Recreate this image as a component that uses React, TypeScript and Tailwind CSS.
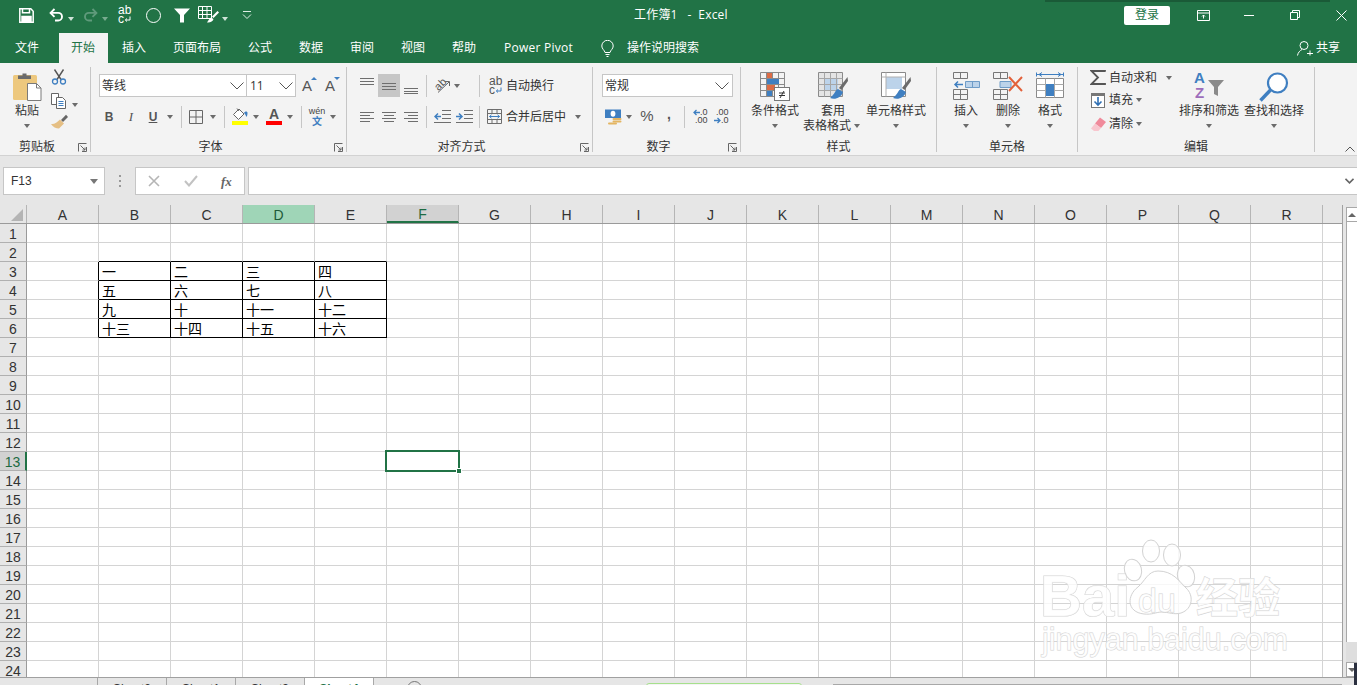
import React from 'react';

const COLS = ['A', 'B', 'C', 'D', 'E', 'F', 'G', 'H', 'I', 'J', 'K', 'L', 'M', 'N', 'O', 'P', 'Q', 'R'];
const ROWS = Array.from({ length: 24 }, (_, i) => i + 1);

const TABLE: Record<number, string[]> = {
  3: ['一', '二', '三', '四'],
  4: ['五', '六', '七', '八'],
  5: ['九', '十', '十一', '十二'],
  6: ['十三', '十四', '十五', '十六'],
};

function Caret({ light }: { light?: boolean }) {
  return (
    <span
      className={`inline-block w-0 h-0 border-x-[3.5px] border-x-transparent border-t-[4px] ${
        light ? 'border-t-[#cfe3d8]' : 'border-t-[#6b6b6b]'
      }`}
    />
  );
}

function Slot({ className, children }: { className: string; children?: React.ReactNode }) {
  return <div className={`flex items-center justify-center h-[23px] shrink-0 ${className}`}>{children}</div>;
}

function Sep({ className = '' }: { className?: string }) {
  return (
    <div className={`flex justify-center w-[8px] shrink-0 ${className}`}>
      <div className="w-px h-[22px] bg-[#c6c6c6]" />
    </div>
  );
}

function Chevron({ className = '' }: { className?: string }) {
  return (
    <svg width="14" height="8" viewBox="0 0 14 8" fill="none" stroke="#555" className={className}>
      <path d="M0.5 0.5 7 7 13.5 0.5" />
    </svg>
  );
}

function Launcher() {
  return (
    <svg width="9" height="9" viewBox="0 0 9 9" fill="none" stroke="#666" className="absolute right-[3px] bottom-0">
      <path d="M0.5 8.5v-8h8M8.5 4v4.5H4M2.5 2.5 7 7M7 4.5V7H4.5" />
    </svg>
  );
}

function Group({
  className,
  label,
  launcher,
  children,
}: {
  className: string;
  label: string;
  launcher?: boolean;
  children: React.ReactNode;
}) {
  return (
    <div className={`relative my-[4px] h-[85px] border-r border-[#c6c6c6] shrink-0 ${className}`}>
      <div className="h-[68px]">{children}</div>
      <div className={`pt-[5px] text-center text-[12px] leading-[14px] text-[#333] ${launcher ? 'pr-[16px]' : ''}`}>
        {label}
      </div>
      {launcher && <Launcher />}
    </div>
  );
}

function BigButton({
  className,
  icon,
  label,
  second,
  noCaret,
}: {
  className: string;
  icon: React.ReactNode;
  label: string;
  second?: string;
  noCaret?: boolean;
}) {
  return (
    <div className={`flex flex-col items-center pt-[5px] text-[12px] leading-[15px] text-[#333] shrink-0 ${className}`}>
      <div className="flex items-start justify-center h-[31px]">{icon}</div>
      <div className="whitespace-nowrap">{label}</div>
      {second ? (
        <div className="flex items-center gap-[3px] whitespace-nowrap pr-[3px]">
          {second}
          <Caret />
        </div>
      ) : (
        !noCaret && (
          <div className="flex items-center h-[15px]">
            <Caret />
          </div>
        )
      )}
    </div>
  );
}

/* ---------- title bar icons ---------- */

function SaveIcon() {
  return (
    <svg width="15" height="15" viewBox="0 0 15 15" fill="none" stroke="#fff" strokeWidth="1.5">
      <path d="M.8.8h11l2.4 2.4v11H.8z" />
      <path d="M3.5 1v3.8h7V1" />
      <path d="M3 14V8.5h9V14" fill="#fff" />
    </svg>
  );
}

function UndoIcon({ color, flip }: { color: string; flip?: boolean }) {
  return (
    <svg width="15" height="14" viewBox="0 0 15 14" fill="none" stroke={color} strokeWidth="1.9" className={flip ? '-scale-x-100' : ''}>
      <path d="M5.5 1 1.6 4.9l3.9 3.9" />
      <path d="M2 4.9h7.2a3.8 3.8 0 0 1 0 7.6H6" />
    </svg>
  );
}

function WrapIcon({ dark }: { dark?: boolean }) {
  return (
    <div className={`flex flex-col font-['Liberation_Sans',sans-serif] text-[12px] w-[13px] ${dark ? 'text-[#555]' : 'text-white'}`}>
      <span className="block h-[9px] leading-[9px]">ab</span>
      <span className="flex items-center h-[9px] leading-[9px]">
        c
        <svg width="7" height="7" viewBox="0 0 7 7" fill="none" stroke={dark ? '#3f7fc1' : '#fff'} strokeWidth="1">
          <path d="M6 0.5V4H1.5M3 2.5 1.3 4 3 5.5" />
        </svg>
      </span>
    </div>
  );
}

function FunnelIcon() {
  return (
    <svg width="16" height="15" viewBox="0 0 16 15" fill="#fff">
      <path d="M0 .5h16l-6 6.5v7.5H6V7z" />
    </svg>
  );
}

function TableBrushIcon() {
  return (
    <svg width="21" height="18" viewBox="0 0 21 18" fill="none" stroke="#fff">
      <path d="M.5.5h13v12H.5zM.5 4.5h13M.5 8.5h13M4.5.5v12M9 .5v12" />
      <path d="M19.5 5 14 10.5l1.5 1.5L21 6.5z" fill="#fff" stroke="none" />
      <path d="M13 11.5c-2 1-2.5 3-4 5 3 .5 6-1 6.5-3.5z" fill="#fff" stroke="none" />
    </svg>
  );
}

/* ---------- clipboard ---------- */

function PasteIcon() {
  return (
    <svg width="30" height="29" viewBox="0 0 30 29" className="ml-[2px]">
      <rect x="0" y="3" width="24" height="25" rx="1.5" fill="#edc87e" />
      <path d="M5 7V3.5h4.5V1.5h4V3.5H18V7z" fill="#6b6b6b" />
      <path d="M14.5 11.5h9l4.5 4.5v12.5h-13.5z" fill="#fff" stroke="#7a7a7a" />
      <path d="M23.5 11.5V16H28" fill="none" stroke="#7a7a7a" />
    </svg>
  );
}

function ScissorsIcon() {
  return (
    <svg width="16" height="16" viewBox="0 0 16 16" fill="none">
      <path d="M3.5 0.5 10 10.5M12.5 0.5 6 10.5" stroke="#555" strokeWidth="1.4" />
      <circle cx="4" cy="12.5" r="2.5" stroke="#3f7fc1" strokeWidth="1.3" />
      <circle cx="12" cy="12.5" r="2.5" stroke="#3f7fc1" strokeWidth="1.3" />
    </svg>
  );
}

function CopyIcon() {
  return (
    <svg width="16" height="16" viewBox="0 0 16 16" fill="none" stroke="#666">
      <path d="M.5.5h7v11h-7z" fill="#fff" />
      <path d="M5.5 4.5h6l3 3v8h-9z" fill="#fff" />
      <path d="M7.5 8.5h5M7.5 10.5h5M7.5 12.5h5" stroke="#3f7fc1" />
    </svg>
  );
}

function BrushIcon() {
  return (
    <svg width="17" height="15" viewBox="0 0 17 15">
      <path d="M10 6 15 .8 17 3l-5 5z" fill="#666" />
      <path d="M9 5.5 13 9.5 8 14.5c-3 0-6-1.5-8-4.5 3.5.5 6-1.5 9-4.5z" fill="#e5bf84" />
    </svg>
  );
}

/* ---------- font ---------- */

function SizeA({ up }: { up?: boolean }) {
  return (
    <div className="relative w-[15px] h-[20px] text-[#555]">
      <span className="absolute left-0 top-[1px] font-['Liberation_Sans',sans-serif] text-[15px] leading-[18px]">A</span>
      <span
        className={`absolute right-0 top-[1px] w-0 h-0 border-x-[3px] border-x-transparent ${
          up ? 'border-b-[3px] border-b-[#3f7fc1]' : 'border-t-[3px] border-t-[#3f7fc1]'
        }`}
      />
    </div>
  );
}

function BorderIcon() {
  return (
    <svg width="14" height="14" viewBox="0 0 14 14" fill="none" stroke="#666">
      <path d="M.5.5h13v13H.5zM7 .5v13M.5 7h13" />
    </svg>
  );
}

function FillIcon() {
  return (
    <div className="flex flex-col items-center">
      <svg width="16" height="13" viewBox="0 0 16 13" fill="none">
        <path d="M7 1 1.5 6.5l5 5 5.5-5.5z" fill="#fff" stroke="#666" />
        <path d="M5 .5 7 3" stroke="#666" />
        <path d="M12 5c1-2 3.5-2 3.5 0 0 2-.5 3-1 4-.5-1.5-1.5-3-2.5-4z" fill="#3f7fc1" />
      </svg>
      <div className="w-[16px] h-[4px] bg-[#ffff00]" />
    </div>
  );
}

function FontColorIcon() {
  return (
    <div className="flex flex-col items-center">
      <span className="font-['Liberation_Sans',sans-serif] font-bold text-[14px] leading-[13px] text-[#555]">A</span>
      <div className="w-[16px] h-[4px] bg-[#ff0000]" />
    </div>
  );
}

function WenIcon() {
  return (
    <div className="flex flex-col items-center">
      <span className="font-['Liberation_Sans',sans-serif] text-[9px] leading-[9px] text-[#444]">wén</span>
      <span className="text-[10px] leading-[11px] font-bold text-[#3f7fc1]">文</span>
    </div>
  );
}

/* ---------- alignment ---------- */

function Lines({ rows }: { rows: [number, number, number][] }) {
  return (
    <svg width="16" height="16" viewBox="0 0 16 16" stroke="#6e6e6e" fill="none">
      {rows.map(([x1, x2, y]) => (
        <path key={`${x1}-${y}`} d={`M${x1} ${y}.5H${x2}`} />
      ))}
    </svg>
  );
}

function OrientIcon() {
  return (
    <div className="relative w-[17px] h-[17px]">
      <span className="absolute left-[0px] top-[1px] -rotate-45 font-['Liberation_Sans',sans-serif] text-[11px] leading-[12px] text-[#555]">
        ab
      </span>
      <svg width="17" height="17" viewBox="0 0 17 17" fill="none" stroke="#666" className="absolute inset-0">
        <path d="M4 15.5 15 5M11 4.5h4.5V9" />
      </svg>
    </div>
  );
}

function IndentIcon({ right }: { right?: boolean }) {
  return (
    <svg width="17" height="15" viewBox="0 0 17 15" fill="none">
      {right ? (
        <>
          <path d="M8 1.5h9M8 5.5h9M8 9.5h9M0 13.5h17" stroke="#6e6e6e" />
          <path d="M0 7.5h5M3 4.5l3 3-3 3" stroke="#3f7fc1" strokeWidth="1.5" />
        </>
      ) : (
        <>
          <path d="M8 1.5h9M8 5.5h9M8 9.5h9M0 13.5h17" stroke="#6e6e6e" />
          <path d="M7 7.5H2M4 4.5l-3 3 3 3" stroke="#3f7fc1" strokeWidth="1.5" />
        </>
      )}
    </svg>
  );
}

function MergeIcon() {
  return (
    <svg width="15" height="15" viewBox="0 0 15 15" fill="none">
      <path d="M.5.5h14v14H.5zM.5 4.5h14M.5 10.5h14M5 .5v4M10 .5v4M5 10.5v4M10 10.5v4" stroke="#6e6e6e" />
      <path d="M2.5 7.5h10M4.5 5.8l-2 1.7 2 1.7M10.5 5.8l2 1.7-2 1.7" stroke="#3f7fc1" />
    </svg>
  );
}

/* ---------- number ---------- */

function CurrencyIcon() {
  return (
    <svg width="17" height="16" viewBox="0 0 17 16" fill="none">
      <rect x="0" y="0.5" width="16" height="8.5" fill="#3f7fc1" />
      <ellipse cx="8" cy="4.7" rx="2.4" ry="3" fill="#fff" />
      <rect x="7.5" y="9" width="9" height="2" rx="1" fill="#e4b562" />
      <rect x="7.5" y="11.5" width="9" height="2" rx="1" fill="#e4b562" />
      <rect x="3" y="13.5" width="9" height="2" rx="1" fill="#e4b562" />
    </svg>
  );
}

function DecimalIcon({ inc }: { inc?: boolean }) {
  return (
    <div className="relative w-[15px] h-[15px] font-['Liberation_Sans',sans-serif] text-[9px] leading-[7px] text-[#444] text-right">
      <div>{inc ? '.0' : '.00'}</div>
      <div className="mt-[1px]">{inc ? '.00' : '.0'}</div>
      <svg width="7" height="7" viewBox="0 0 7 7" fill="none" stroke="#3f7fc1" strokeWidth="1.3" className={`absolute left-0 ${inc ? 'top-0' : 'top-[8px]'}`}>
        {inc ? <path d="M7 3.5H1M3.5 1 1 3.5 3.5 6" /> : <path d="M0 3.5h6M3.5 1 6 3.5 3.5 6" />}
      </svg>
    </div>
  );
}

/* ---------- styles ---------- */

function CondFormatIcon() {
  return (
    <svg width="30" height="29" viewBox="0 0 30 29" fill="none">
      <path d="M.5.5h24v24H.5zM.5 6.5h24M.5 12.5h24M.5 18.5h24M6.5.5v24M12.5.5v24M18.5.5v24" stroke="#8a8a8a" />
      <rect x="7" y="1" width="5" height="5" fill="#dc6c46" />
      <rect x="7" y="7" width="12" height="5" fill="#3f7fc1" />
      <rect x="7" y="13" width="8" height="5" fill="#dc6c46" />
      <rect x="7" y="19" width="5" height="5" fill="#3f7fc1" />
      <rect x="14.5" y="15.5" width="15" height="13" fill="#fff" stroke="#777" />
      <path d="M19 21h6M19 23.5h6M24 19l-4 7" stroke="#333" />
    </svg>
  );
}

function TableStyleIcon() {
  return (
    <svg width="30" height="29" viewBox="0 0 30 29" fill="none">
      <path d="M.5.5h24v24H.5z" fill="#e4e4e4" stroke="#8a8a8a" />
      <rect x="6" y="6" width="14" height="13" fill="#bcd3ea" />
      <path d="M.5 6.5h24M.5 12.5h24M.5 18.5h24M6.5.5v24M12.5.5v24M18.5.5v24" stroke="#a6a6a6" />
      <path d="M29.5 5 21 16l2.5 2 6.5-9z" fill="#6b6b6b" />
      <path d="M20 17c-3 1-3 5-8 9 5 2 11 0 13-6z" fill="#3f7fc1" />
    </svg>
  );
}

function CellStyleIcon() {
  return (
    <svg width="30" height="29" viewBox="0 0 30 29" fill="none">
      <path d="M.5.5h24v24H.5z" fill="#fff" stroke="#8a8a8a" />
      <rect x="5" y="5" width="16" height="12" fill="#bcd3ea" />
      <path d="M5 .5v24M.5 5h24" stroke="#b0b0b0" />
      <path d="M29.5 5 21 16l2.5 2 6.5-9z" fill="#6b6b6b" />
      <path d="M20 17c-3 1-3 5-8 9 5 2 11 0 13-6z" fill="#3f7fc1" />
    </svg>
  );
}

/* ---------- cells ---------- */

function InsertIcon() {
  return (
    <svg width="27" height="29" viewBox="0 0 27 29" fill="none">
      <path d="M.5.5h14v6H.5zM7.5.5v6M.5 17.5h14v10H.5zM7.5 17.5v10M.5 22.5h14" stroke="#777" />
      <path d="M12.5 9.5h14v6h-14zM19.5 9.5v6" fill="#bcd3ea" stroke="#6f9cc7" />
      <path d="M10 12.5H2M5 9.5l-3 3 3 3" stroke="#3f7fc1" strokeWidth="1.5" />
    </svg>
  );
}

function DeleteIcon() {
  return (
    <svg width="30" height="29" viewBox="0 0 30 29" fill="none">
      <path d="M.5.5h14v6H.5zM7.5.5v6M.5 17.5h14v10H.5zM7.5 17.5v10M.5 22.5h14" stroke="#777" />
      <path d="M7 9.5h11v6H7z" fill="#bcd3ea" stroke="#6f9cc7" />
      <path d="M16 5l13 14M29 5 16 19" stroke="#e2603a" strokeWidth="2" />
    </svg>
  );
}

function FormatIcon() {
  return (
    <svg width="28" height="30" viewBox="0 0 28 30" fill="none">
      <path d="M.5 2.5h27M.5.5v4M27.5.5v4M3 2.5l3-2M3 2.5l3 2M25 2.5l-3-2M25 2.5l-3 2" stroke="#3f7fc1" />
      <path d="M.5 6.5h27v19H.5z" fill="#fff" stroke="#8a8a8a" />
      <path d="M.5 12.5h27M.5 18.5h27M9.5 6.5v19M18.5 6.5v19" stroke="#a8a8a8" />
      <rect x="10" y="12" width="8" height="12" fill="#3f7fc1" />
    </svg>
  );
}

/* ---------- editing ---------- */

function SigmaIcon() {
  return (
    <svg width="16" height="15" viewBox="0 0 16 15" fill="none" stroke="#555" strokeWidth="1.8">
      <path d="M15 1.8V1H1.5L8 7.5 1.5 14H15v-1" />
    </svg>
  );
}

function FillDownIcon() {
  return (
    <svg width="14" height="15" viewBox="0 0 14 15" fill="none">
      <rect x="0.5" y="0.5" width="13" height="14" fill="#fff" stroke="#777" />
      <rect x="0" y="0" width="14" height="3" fill="#777" />
      <path d="M7 4v8M3.5 8.5 7 12l3.5-3.5" stroke="#2f6fb3" strokeWidth="1.6" />
    </svg>
  );
}

function EraserIcon() {
  return (
    <svg width="15" height="14" viewBox="0 0 15 14">
      <path d="M9 .5 15 5 10 11 4 6.5z" fill="#f08a9b" />
      <path d="M4 6.5 10 11 7.5 14H3L0 11.5z" fill="#f8c6ce" />
    </svg>
  );
}

function SortIcon() {
  return (
    <div className="relative w-[30px] h-[30px]">
      <span className="absolute left-0 -top-[2px] font-['Liberation_Sans',sans-serif] font-bold text-[15px] leading-[16px] text-[#3f7fc1]">A</span>
      <span className="absolute left-[1px] top-[13px] font-['Liberation_Sans',sans-serif] font-bold text-[15px] leading-[16px] text-[#9d6dbb]">Z</span>
      <svg width="16" height="16" viewBox="0 0 16 16" className="absolute right-0 top-[8px]">
        <path d="M0 0h16L10 7v9l-4-2V7z" fill="#8a8a8a" />
      </svg>
    </div>
  );
}

function SearchIcon() {
  return (
    <svg width="30" height="30" viewBox="0 0 30 30" fill="none">
      <circle cx="18.5" cy="11" r="9.5" stroke="#3f7fc1" strokeWidth="2.2" fill="#fff" />
      <path d="M11.5 18 1.5 28.5" stroke="#3f7fc1" strokeWidth="3.4" />
    </svg>
  );
}

/* ---------- sheet ---------- */

function cellBorder(col: number, row: number) {
  const right = col <= 4 && row >= 3 && row <= 6 ? 'border-r-black' : 'border-r-[#d4d4d4]';
  const bottom = col >= 1 && col <= 4 && row >= 2 && row <= 6 ? 'border-b-black' : 'border-b-[#d4d4d4]';
  return `${right} ${bottom}`;
}

function SheetRow({ row }: { row: number }) {
  return (
    <div className="flex h-[19px] shrink-0">
      <div
        className={`w-[27px] shrink-0 pt-[2px] border-b border-b-[#b0b0b0] flex items-center justify-center font-['Liberation_Sans',sans-serif] text-[14px] ${
          row === 13
            ? 'bg-[#d2d2d2] border-r-2 border-r-[#217346] text-[#1d6b42]'
            : 'bg-[#e6e6e6] border-r border-r-[#9a9a9a] text-[#333]'
        }`}
      >
        {row}
      </div>
      {COLS.map((c, i) => {
        const text = TABLE[row] && i >= 1 && i <= 4 ? TABLE[row][i - 1] : '';
        return (
          <div
            key={c}
            className={`relative w-[72px] shrink-0 border-r border-b pl-[3px] pt-px text-[14px] leading-[18px] text-black ${cellBorder(i, row)}`}
          >
            {text}
            {c === 'F' && row === 13 && (
              <div className="absolute -left-[2px] -top-[2px] w-[75px] h-[22px] border-2 border-[#217346] z-10">
                <div className="absolute -right-[4px] -bottom-[4px] w-[6px] h-[6px] bg-[#217346] border border-white" />
              </div>
            )}
          </div>
        );
      })}
      <div className="flex-1 border-b border-b-[#d4d4d4]" />
    </div>
  );
}

function Watermark() {
  const stroke = "[-webkit-text-stroke:1px_#d2d2d2] [paint-order:stroke_fill] text-white/80 font-['Liberation_Sans',sans-serif]";
  return (
    <div className="absolute left-[1040px] top-[538px] w-[245px] h-[118px] z-20">
      <span className={`absolute left-0 top-[28px] font-bold text-[58px] leading-[60px] ${stroke}`}>Bai</span>
      <svg width="76" height="76" viewBox="0 0 76 76" fill="#ffffff" fillOpacity="0.8" stroke="#d2d2d2" className="absolute left-[82px] top-[1px]">
        <ellipse cx="29" cy="12" rx="8.5" ry="11" />
        <ellipse cx="50" cy="16" rx="8.5" ry="11" />
        <ellipse cx="11" cy="31" rx="8.5" ry="11" transform="rotate(-15 11 31)" />
        <ellipse cx="64" cy="37" rx="8.5" ry="11" transform="rotate(-15 64 37)" />
        <path d="M36 32C26 32 23 42 16 48 5 56 4 73 22 75c8 1 12-2 18-2s12 3 19 1c12-4 13-18 5-25-7-7-13-17-28-17z" />
      </svg>
      <span className={`absolute left-[98px] top-[44px] text-[34px] leading-[36px] ${stroke}`}>du</span>
      <span className="absolute left-[156px] top-[36px] text-[42px] leading-[46px] [-webkit-text-stroke:1px_#d2d2d2] [paint-order:stroke_fill] text-white/80 font-bold">经验</span>
      <span className={`absolute left-[2px] top-[84px] text-[30.5px] leading-[34px] whitespace-nowrap ${stroke}`}>jingyan.baidu.com</span>
    </div>
  );
}

export default function App() {
  const tabs = [
    { name: '文件', cls: 'w-[56px] pr-[2px]' },
    { name: '开始', cls: 'w-[49px] pr-[1px] bg-[#f3f3f3] text-[#217346]' },
    { name: '插入', cls: 'w-[48px] pr-[2px]' },
    { name: '页面布局', cls: 'w-[72px] pr-[2px]' },
    { name: '公式', cls: 'w-[48px] pr-[2px]' },
    { name: '数据', cls: 'w-[48px] pr-[2px]' },
    { name: '审阅', cls: 'w-[48px] pr-[2px]' },
    { name: '视图', cls: 'w-[48px] pr-[2px]' },
    { name: '帮助', cls: 'w-[48px] pr-[2px]' },
    { name: 'Power Pivot', cls: 'w-[93px] tracking-[0.25px]' },
  ];

  return (
    <div className="relative w-[1357px] h-[685px] overflow-hidden bg-[#e6e6e6] font-['Open_Sans','Noto_Sans_CJK_SC',sans-serif]">
      {/* title bar */}
      <div className="relative flex items-center h-[33px] pb-[3px] bg-[#217346] text-white">
        <div className="absolute left-[1045px] top-0 w-[285px] h-[2px] bg-[#1a5a37]" />
        <div className="ml-[19px]"><SaveIcon /></div>
        <div className="ml-[15px]"><UndoIcon color="#fff" /></div>
        <div className="ml-[4px]"><Caret light /></div>
        <div className="ml-[9px]"><UndoIcon color="#5f9a7b" flip /></div>
        <div className="ml-[4px] opacity-50"><Caret light /></div>
        <div className="ml-[10px]"><WrapIcon /></div>
        <div className="ml-[15px] w-[15px] h-[15px] rounded-full border border-white" />
        <div className="ml-[13px]"><FunnelIcon /></div>
        <div className="ml-[8px]"><TableBrushIcon /></div>
        <div className="ml-[3px]"><Caret light /></div>
        <svg width="10" height="9" viewBox="0 0 10 9" fill="none" stroke="#dfeee6" className="ml-[14px]">
          <path d="M1 .5h8M1 3.5l4 4 4-4" />
        </svg>
        <div className="ml-[382px] w-[93px] text-[12px] whitespace-nowrap tracking-[0.2px]">工作簿1 &nbsp;&nbsp;-&nbsp;&nbsp;Excel</div>
        <div className="ml-[397px] flex items-center justify-center w-[46px] h-[19px] rounded-[2px] bg-white text-[12px] text-[#217346]">
          登录
        </div>
        <svg width="13" height="11" viewBox="0 0 13 11" fill="none" stroke="#fff" className="ml-[27px]">
          <path d="M.5.5h12v10H.5zM.5 3h12M6.5 8.5V5M5 6.5l1.5-1.5L8 6.5" />
        </svg>
        <div className="ml-[34px] w-[10px] h-px bg-white" />
        <svg width="10" height="10" viewBox="0 0 10 10" fill="none" stroke="#fff" className="ml-[36px]">
          <path d="M.5 2.5h7v7h-7zM2.5 2.5v-2h7v7h-2" />
        </svg>
        <svg width="11" height="11" viewBox="0 0 11 11" fill="none" stroke="#fff" className="ml-[36px]">
          <path d="M.5.5l10 10M10.5.5l-10 10" />
        </svg>
      </div>

      {/* tabs */}
      <div className="flex items-stretch h-[30px] bg-[#217346] text-[12px] text-white">
        <div className="flex gap-[3px]">
          {tabs.map((t) => (
            <div key={t.name} className={`flex items-center justify-center whitespace-nowrap ${t.cls}`}>
              {t.name}
            </div>
          ))}
        </div>
        <svg width="13" height="17" viewBox="0 0 13 17" fill="none" stroke="#fff" className="ml-[16px] self-center">
          <path d="M4 12.5C3.5 10 .8 9 .8 6a5.7 5.7 0 0 1 11.4 0c0 3-2.7 4-3.2 6.5zM4.5 14.5h4M5.5 16.5h2" />
        </svg>
        <div className="ml-[13px] flex items-center whitespace-nowrap">操作说明搜索</div>
        <svg width="16" height="15" viewBox="0 0 16 15" fill="none" stroke="#fff" className="ml-[598px] self-center">
          <circle cx="7" cy="4.5" r="4" />
          <path d="M.5 14.5c.5-3 2.5-5 4.5-6M10 12.5h6M13 9.5v5" />
        </svg>
        <div className="ml-[3px] flex items-center whitespace-nowrap">共享</div>
      </div>

      {/* ribbon */}
      <div className="relative flex h-[93px] bg-[#f3f3f3] border-b border-[#d2d2d2] text-[#333]">
        <Group className="w-[91px]" label="剪贴板" launcher>
          <div className="flex">
            <BigButton className="ml-[12px] w-[30px]" icon={<PasteIcon />} label="粘贴" />
            <div className="ml-[6px] w-[32px] pt-[2px]">
              <div className="w-[22px] flex justify-center h-[20px]"><ScissorsIcon /></div>
              <div className="flex items-center h-[23px]">
                <div className="w-[22px] flex justify-center"><CopyIcon /></div>
                <div className="ml-[2px]"><Caret /></div>
              </div>
              <div className="w-[22px] flex justify-center pt-[2px]"><BrushIcon /></div>
            </div>
          </div>
        </Group>

        <Group className="w-[256px]" label="字体" launcher>
          <div className="pl-[8px] pt-[7px]">
            <div className="flex items-center h-[23px]">
              <div className="flex items-center justify-between w-[148px] h-[23px] pl-[2px] pr-[2px] bg-white border border-[#c6c6c6] text-[12px]">
                等线
                <Chevron />
              </div>
              <div className="flex items-center justify-between -ml-px w-[50px] h-[23px] pl-[3px] pr-[2px] bg-white border border-[#c6c6c6] text-[12px]">
                11
                <Chevron />
              </div>
              <div className="ml-[6px]"><SizeA up /></div>
              <div className="ml-[8px]"><SizeA /></div>
            </div>
            <div className="flex items-center h-[23px] mt-[8px] text-[#555]">
              <Slot className="w-[20px] font-['Liberation_Sans',sans-serif] font-bold text-[12px]">B</Slot>
              <Slot className="w-[24px] font-['Liberation_Serif',serif] italic text-[13px]">I</Slot>
              <Slot className="w-[20px] font-['Liberation_Sans',sans-serif] font-bold text-[12px] underline">U</Slot>
              <Slot className="w-[14px]"><Caret /></Slot>
              <Sep />
              <Slot className="w-[22px]"><BorderIcon /></Slot>
              <Slot className="w-[12px]"><Caret /></Slot>
              <Sep className="mx-px" />
              <Slot className="w-[22px]"><FillIcon /></Slot>
              <Slot className="w-[10px]"><Caret /></Slot>
              <Slot className="w-[26px]"><FontColorIcon /></Slot>
              <Slot className="w-[6px]"><Caret /></Slot>
              <Sep className="mx-[4px]" />
              <Slot className="w-[16px]"><WenIcon /></Slot>
              <Slot className="w-[16px]"><Caret /></Slot>
            </div>
          </div>
        </Group>

        <Group className="w-[246px]" label="对齐方式" launcher>
          <div className="pl-[9px] pt-[7px]">
            <div className="flex items-center h-[23px]">
              <Slot className="w-[22px]"><Lines rows={[[1, 15, 3], [1, 15, 6], [1, 15, 0]]} /></Slot>
              <Slot className="w-[22px] bg-[#c6c6c6]"><Lines rows={[[1, 15, 5], [1, 15, 8], [1, 15, 11]]} /></Slot>
              <Slot className="w-[22px]"><Lines rows={[[1, 15, 10], [1, 15, 13], [1, 15, 15]]} /></Slot>
              <Sep />
              <Slot className="w-[24px]"><OrientIcon /></Slot>
              <Slot className="w-[6px]"><Caret /></Slot>
              <Sep className="ml-[15px]" />
              <div className="ml-[6px]"><WrapIcon dark /></div>
              <div className="ml-[4px] text-[12px] whitespace-nowrap">自动换行</div>
            </div>
            <div className="flex items-center h-[23px] mt-[8px]">
              <Slot className="w-[22px]"><Lines rows={[[1, 15, 3], [1, 11, 6], [1, 15, 9], [1, 11, 12]]} /></Slot>
              <Slot className="w-[22px]"><Lines rows={[[1, 15, 3], [3, 13, 6], [1, 15, 9], [3, 13, 12]]} /></Slot>
              <Slot className="w-[22px]"><Lines rows={[[1, 15, 3], [5, 15, 6], [1, 15, 9], [5, 15, 12]]} /></Slot>
              <Sep />
              <Slot className="w-[24px]"><IndentIcon /></Slot>
              <Slot className="w-[20px]"><IndentIcon right /></Slot>
              <Sep className="ml-px" />
              <div className="ml-[4px]"><MergeIcon /></div>
              <div className="ml-[4px] text-[12px] whitespace-nowrap">合并后居中</div>
              <div className="ml-[9px] flex"><Caret /></div>
            </div>
          </div>
        </Group>

        <Group className="w-[148px]" label="数字" launcher>
          <div className="pl-[9px] pt-[7px]">
            <div className="flex items-center justify-between w-[131px] h-[23px] pl-[2px] pr-[3px] bg-white border border-[#c6c6c6] text-[12px]">
              常规
              <Chevron />
            </div>
            <div className="flex items-center h-[23px] mt-[8px] text-[#555]">
              <Slot className="w-[22px]"><CurrencyIcon /></Slot>
              <Slot className="w-[10px]"><Caret /></Slot>
              <Slot className="w-[26px] font-['Liberation_Sans',sans-serif] text-[15px]">%</Slot>
              <Slot className="w-[18px] font-['Liberation_Sans',sans-serif] font-bold text-[14px] pb-[4px]">,</Slot>
              <Sep className="mx-[2px]" />
              <Slot className="w-[20px]"><DecimalIcon inc /></Slot>
              <Slot className="w-[22px]"><DecimalIcon /></Slot>
            </div>
          </div>
        </Group>

        <Group className="w-[196px]" label="样式">
          <div className="flex">
            <BigButton className="ml-[4px] w-[60px]" icon={<CondFormatIcon />} label="条件格式" />
            <BigButton className="w-[56px]" icon={<TableStyleIcon />} label="套用" second="表格格式" />
            <BigButton className="w-[70px]" icon={<CellStyleIcon />} label="单元格样式" />
          </div>
        </Group>

        <Group className="w-[141px]" label="单元格">
          <div className="flex">
            <BigButton className="ml-[8px] w-[42px]" icon={<InsertIcon />} label="插入" />
            <BigButton className="w-[42px]" icon={<DeleteIcon />} label="删除" />
            <BigButton className="w-[42px]" icon={<FormatIcon />} label="格式" />
          </div>
        </Group>

        <Group className="w-[237px]" label="编辑">
          <div className="flex">
            <div className="ml-[12px] w-[89px] text-[12px]">
              <div className="flex items-center h-[21px]">
                <SigmaIcon />
                <span className="ml-[3px]">自动求和</span>
                <span className="ml-[9px] flex"><Caret /></span>
              </div>
              <div className="flex items-center h-[24px] pl-px">
                <FillDownIcon />
                <span className="ml-[4px]">填充</span>
                <span className="ml-[3px] flex"><Caret /></span>
              </div>
              <div className="flex items-center h-[23px] pl-px">
                <EraserIcon />
                <span className="ml-[3px]">清除</span>
                <span className="ml-[3px] flex"><Caret /></span>
              </div>
            </div>
            <BigButton className="w-[60px]" icon={<SortIcon />} label="排序和筛选" />
            <BigButton className="ml-[5px] w-[60px]" icon={<SearchIcon />} label="查找和选择" />
          </div>
        </Group>

        <svg width="10" height="6" viewBox="0 0 10 6" fill="none" stroke="#555" className="absolute right-[2px] top-[83px]">
          <path d="M.5 5.5 5 1l4.5 4.5" />
        </svg>
      </div>

      {/* formula bar */}
      <div className="flex items-start h-[49px] pt-[11px] bg-[#e6e6e6]">
        <div className="ml-[3px] flex items-center justify-between w-[102px] h-[28px] pl-[7px] pr-[6px] bg-white border border-[#c6c6c6] font-['Liberation_Sans',sans-serif] text-[12px] text-[#333]">
          F13
          <span className="w-0 h-0 border-x-[4px] border-x-transparent border-t-[5px] border-t-[#777]" />
        </div>
        <div className="ml-[14px] mt-[8px] flex flex-col gap-[3px]">
          <span className="w-[2px] h-[2px] bg-[#999]" />
          <span className="w-[2px] h-[2px] bg-[#999]" />
          <span className="w-[2px] h-[2px] bg-[#999]" />
        </div>
        <div className="ml-[14px] flex items-center w-[110px] h-[28px] bg-white border border-[#c6c6c6]">
          <svg width="12" height="12" viewBox="0 0 12 12" fill="none" stroke="#b5b5b5" strokeWidth="1.6" className="ml-[12px]">
            <path d="M1 1l10 10M11 1 1 11" />
          </svg>
          <svg width="14" height="12" viewBox="0 0 14 12" fill="none" stroke="#c2c2c2" strokeWidth="2" className="ml-[24px]">
            <path d="M1 6l4 4.5L13 1" />
          </svg>
          <span className="ml-[23px] font-['Liberation_Serif',serif] italic font-bold text-[13px] leading-none text-[#666]">fx</span>
        </div>
        <div className="relative ml-[3px] flex-1 h-[28px] bg-white border-y border-l border-[#c6c6c6]">
          <svg width="9" height="6" viewBox="0 0 9 6" fill="none" stroke="#666" strokeWidth="1.6" className="absolute right-[3px] top-[10px]">
            <path d="M.5.8 4.5 4.8 8.5.8" />
          </svg>
        </div>
      </div>

      {/* sheet */}
      <div className="flex h-[472px]">
        <div className="flex flex-col w-[1343px] border-r border-[#a0a0a0] overflow-hidden bg-white">
          <div className="flex h-[19px] shrink-0 bg-[#e6e6e6] border-b border-[#9a9a9a]">
            <div className="flex items-end justify-end w-[27px] pr-[3px] pb-[2px] border-r border-[#b5b5b5]">
              <span className="w-0 h-0 border-l-[12px] border-l-transparent border-b-[12px] border-b-[#b4b4b4]" />
            </div>
            {COLS.map((c) => (
              <div
                key={c}
                className={`flex items-center justify-center w-[72px] shrink-0 pt-[2px] border-r border-[#b5b5b5] font-['Liberation_Sans',sans-serif] text-[14px] ${
                  c === 'D'
                    ? 'bg-[#9fd5b7] text-[#1d5a38]'
                    : c === 'F'
                    ? 'bg-[#d2d2d2] text-[#1d6b42] border-b-2 border-b-[#217346]'
                    : 'text-[#333]'
                }`}
              >
                {c}
              </div>
            ))}
          </div>
          {ROWS.map((r) => (
            <SheetRow key={r} row={r} />
          ))}
        </div>
        <div className="flex flex-col w-[11px] ml-[3px] pt-[2px] bg-[#e6e6e6]">
          <div className="flex items-center justify-center h-[15px] bg-white border-l border-y border-[#a8a8a8]">
            <span className="w-0 h-0 border-x-[4px] border-x-transparent border-b-[4px] border-b-[#666]" />
          </div>
          <div className="h-[420px] bg-white border-l border-[#a8a8a8]" />
          <div className="h-[20px] bg-[#dedede]" />
          <div className="flex items-center justify-center h-[15px] bg-white border-l border-y border-[#a8a8a8]">
            <span className="w-0 h-0 border-x-[4px] border-x-transparent border-t-[4px] border-t-[#666]" />
          </div>
        </div>
      </div>

      {/* sheet tabs */}
      <div className="flex h-[8px] overflow-hidden bg-[#e6e6e6] border-t border-[#a0a0a0] font-['Liberation_Sans',sans-serif] text-[12px] text-[#333]">
        <div className="w-[98px] shrink-0 border-r border-[#a8a8a8]" />
        {['Sheet2', 'Sheet1', 'Sheet3'].map((s) => (
          <div key={s} className="w-[69px] shrink-0 pt-[4px] text-center border-r border-[#a8a8a8] leading-[14px]">
            {s}
          </div>
        ))}
        <div className="-mt-px w-[69px] shrink-0 pt-[5px] text-center bg-white text-[#217346] font-bold leading-[14px] border-r border-[#a8a8a8]">
          Sheet4
        </div>
        <div className="ml-[33px] mt-[3px] w-[15px] h-[15px] rounded-full border border-[#777] shrink-0" />
        <div className="ml-[224px] mt-[5px] w-[156px] h-[10px] rounded-t-[3px] bg-[#f4f4f4] border border-[#a6e08c] shrink-0" />
        <div className="ml-[31px] mt-[6px] w-[509px] h-px bg-[#a8a8a8] shrink-0" />
      </div>

      {/* mouse pointer caught in the capture */}
      <div className="absolute left-[1354px] top-[663px] w-[3px] h-[22px] bg-[#2b3040]" />

      <Watermark />
    </div>
  );
}
